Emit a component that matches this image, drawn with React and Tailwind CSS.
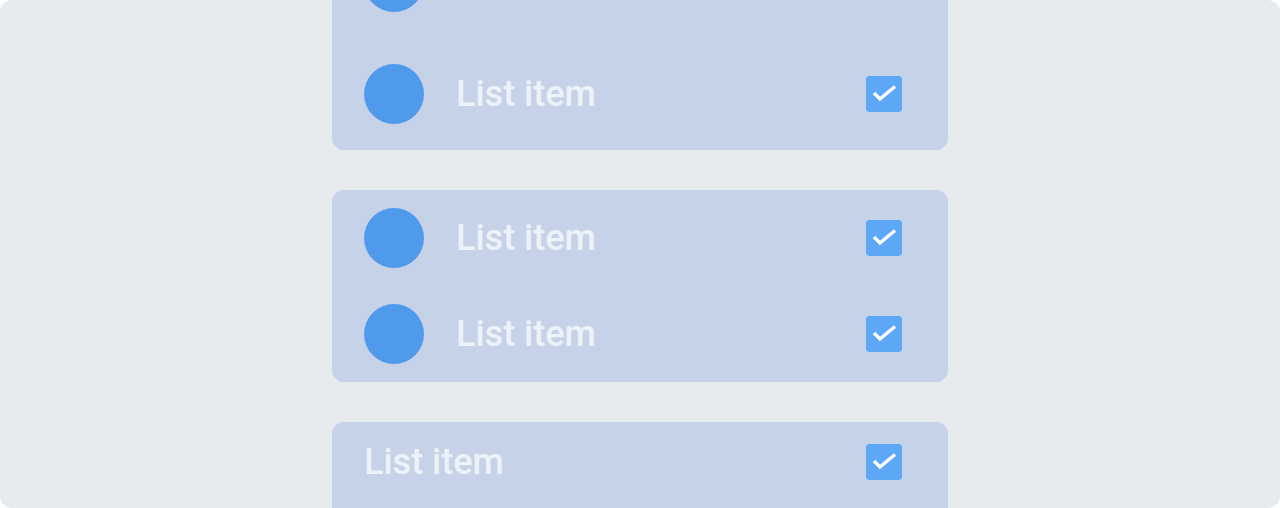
const CheckBox = () => (
  <div className="flex h-9 w-9 shrink-0 items-center justify-center rounded-[4px] bg-[#5ca7f6]">
    <svg viewBox="0 0 36 36" className="h-9 w-9" fill="none">
      <polyline points="8,17 14,23 29,10.5" stroke="#ffffff" strokeWidth="3.4" strokeLinejoin="miter" />
    </svg>
  </div>
);

const Row = ({ height, avatar = true }) => (
  <div className={`flex items-center pl-8 pr-[46px] ${height}`}>
    {avatar && <div className="mr-8 h-[60px] w-[60px] shrink-0 rounded-full bg-[#4f9aeb]" />}
    <span className="flex-1 text-[36px] font-medium leading-none text-[#edf2f9]">List item</span>
    <CheckBox />
  </div>
);

export default function App() {
  return (
    <div className="bg-white" style={{ fontFamily: "Roboto, 'Liberation Sans', sans-serif" }}>
      <div className="flex h-[508px] w-full flex-col items-center overflow-hidden rounded-xl bg-[#e7ebee]">
        <div className="-mt-[74px] flex flex-col gap-10">
          <div className="w-[616px] rounded-xl bg-[#c6d2e8]">
            <Row height="h-[112px]" />
            <Row height="h-[112px]" />
          </div>
          <div className="w-[616px] rounded-xl bg-[#c6d2e8]">
            <Row height="h-24" />
            <Row height="h-24" />
          </div>
          <div className="w-[616px] rounded-xl bg-[#c6d2e8]">
            <Row height="h-20" avatar={false} />
            <Row height="h-20" avatar={false} />
          </div>
        </div>
      </div>
    </div>
  );
}
